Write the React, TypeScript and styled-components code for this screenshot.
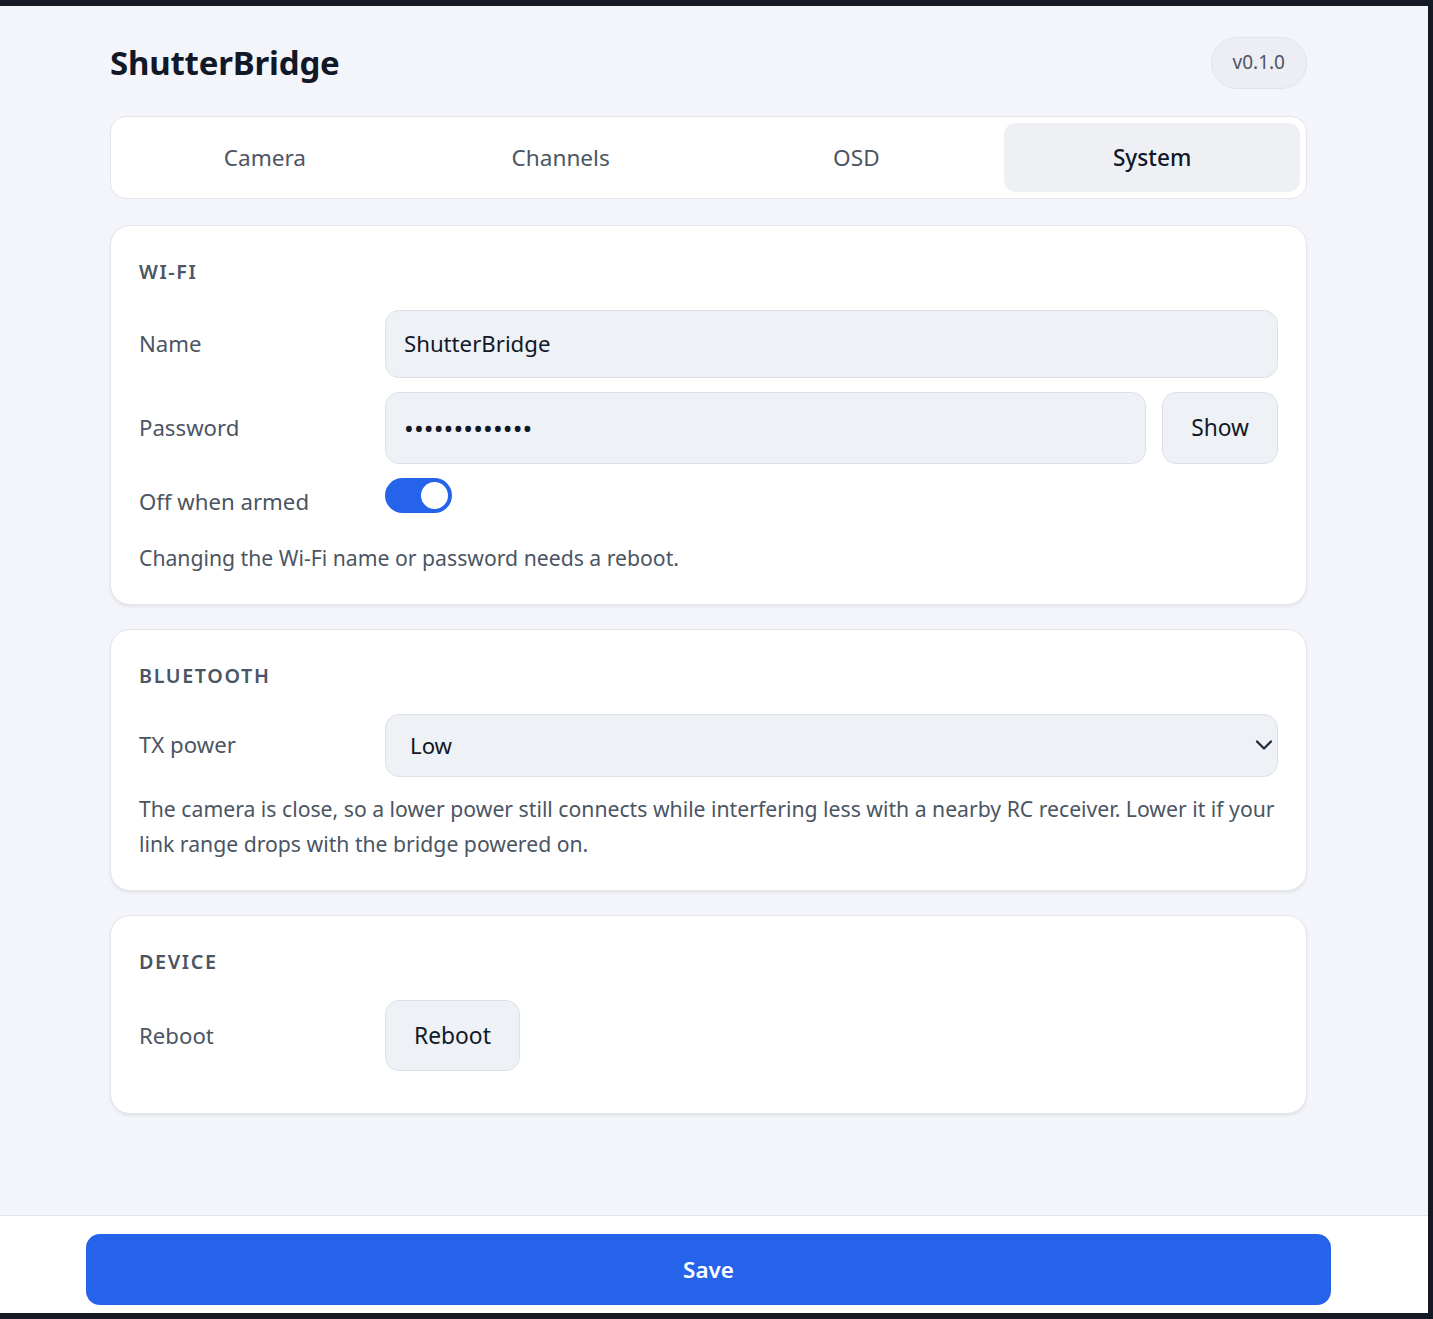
import React, { useState } from "react";
import styled, { createGlobalStyle } from "styled-components";

const GlobalStyle = createGlobalStyle`
  * { box-sizing: border-box; }
  html, body { margin: 0; padding: 0; }
  body {
    background: #151923;
    font-family: "Noto Sans", "Open Sans", sans-serif;
    font-size: 21.2px;
    line-height: 35.84px;
    color: #111827;
  }
`;

const Frame = styled.div`
  padding: 6px 5px 6px 0;
  width: 1433px;
  height: 1319px;
  background: #151923;
`;

const Window = styled.div`
  width: 1428px;
  height: 1307px;
  background: #f4f5fa;
  display: flex;
  flex-direction: column;
  overflow: hidden;
`;

const Scroll = styled.main`
  flex: 1;
  padding: 31px 0 0 110px;
`;

const Column = styled.div`
  width: 1197px;
  display: flex;
  flex-direction: column;
  gap: 24px;
`;

const Header = styled.header`
  display: flex;
  align-items: center;
  justify-content: space-between;
  height: 52px;
  margin-bottom: 3px;
`;

const Title = styled.h1`
  margin: 0;
  font-size: 33px;
  font-weight: 700;
  color: #111827;
  line-height: 40px;
  letter-spacing: -0.2px;
`;

const Version = styled.span`
  height: 52px;
  padding: 0 21px;
  display: inline-flex;
  align-items: center;
  border-radius: 999px;
  background: #eceef3;
  border: 1px solid #e1e3e8;
  color: #4b5563;
  font-size: 19px;
`;

const Tabs = styled.nav`
  display: grid;
  grid-template-columns: repeat(4, 1fr);
  padding: 6px;
  height: 83px;
  background: #ffffff;
  border: 1px solid #e2e5ea;
  border-radius: 16px;
  margin-bottom: 2px;
`;

const Tab = styled.button<{ $active?: boolean }>`
  border: none;
  border-radius: 12px;
  font-family: inherit;
  font-size: 22.6px;
  background: ${(p) => (p.$active ? "#eef0f4" : "transparent")};
  color: ${(p) => (p.$active ? "#111827" : "#4b5563")};
  font-weight: ${(p) => (p.$active ? 500 : 400)};
  cursor: pointer;
`;

const Card = styled.section`
  background: #ffffff;
  border: 1px solid #e2e5ea;
  border-radius: 20px;
  padding: 28px;
  box-shadow: 0 2px 3px rgba(17, 24, 39, 0.07);
`;

const CardTitle = styled.h2`
  margin: 0 0 20px;
  font-size: 19.8px;
  font-weight: 600;
  letter-spacing: 1.6px;
  text-transform: uppercase;
  color: #4b5563;
  line-height: 35.84px;
`;

const Row = styled.div<{ $minH?: number }>`
  display: grid;
  grid-template-columns: 246px 1fr;
  align-items: center;
  margin-bottom: 14px;
  min-height: ${(p) => (p.$minH ? `${p.$minH}px` : "auto")};
`;

const Label = styled.label`
  color: #4b5563;
  font-size: 22.2px;
`;

const Field = styled.div`
  display: flex;
  gap: 16px;
  align-items: stretch;
`;

const Input = styled.input<{ $h?: number }>`
  flex: 1;
  min-width: 0;
  height: ${(p) => p.$h ?? 68}px;
  padding: 0 18px;
  border: 1px solid #dde1e7;
  border-radius: 14px;
  background: #eef1f6;
  font-family: inherit;
  font-size: 22.2px;
  color: #111827;
  outline: none;
  &[type="password"] {
    font-size: 26px;
    letter-spacing: 0.1px;
  }
`;

const Button = styled.button<{ $h?: number }>`
  height: ${(p) => p.$h ?? 70}px;
  padding: 0 28px;
  border: 1px solid #dde1e7;
  border-radius: 14px;
  background: #eef1f6;
  font-family: inherit;
  font-size: 22.8px;
  color: #111827;
  cursor: pointer;
`;

const ToggleTrack = styled.button<{ $on: boolean }>`
  align-self: start;
  width: 67px;
  height: 35px;
  border: none;
  padding: 4px;
  border-radius: 999px;
  background: ${(p) => (p.$on ? "#2563eb" : "#cbd2dc")};
  display: flex;
  justify-content: ${(p) => (p.$on ? "flex-end" : "flex-start")};
  cursor: pointer;
`;

const ToggleKnob = styled.span`
  width: 27px;
  height: 27px;
  border-radius: 50%;
  background: #ffffff;
`;

const Help = styled.p`
  margin: 0;
  color: #4b5563;
  font-size: 21.2px;
  line-height: 35.84px;
`;

const SelectWrap = styled.div`
  position: relative;
`;

const Select = styled.select`
  width: 100%;
  height: 63px;
  padding: 0 50px 0 24px;
  appearance: none;
  -webkit-appearance: none;
  border: 1px solid #dde1e7;
  border-radius: 14px;
  background: #eef1f6;
  font-family: inherit;
  font-size: 22.2px;
  color: #111827;
  outline: none;
`;

const Chevron = styled.svg`
  position: absolute;
  right: 0;
  top: 50%;
  transform: translateY(-50%);
  pointer-events: none;
`;

const Footer = styled.footer`
  background: #ffffff;
  border-top: 1px solid #e3e5ea;
  height: 98px;
  padding: 18px 0 0 86px;
`;

const SaveButton = styled.button`
  width: 1245px;
  height: 71px;
  border: none;
  border-radius: 14px;
  background: #2563eb;
  color: #ffffff;
  font-family: inherit;
  font-size: 22.4px;
  font-weight: 600;
  cursor: pointer;
`;

export default function App() {
  const [show, setShow] = useState(false);
  const [armedOff, setArmedOff] = useState(true);
  return (
    <>
      <GlobalStyle />
      <Frame>
        <Window>
          <Scroll>
            <Column>
              <Header>
                <Title>ShutterBridge</Title>
                <Version>v0.1.0</Version>
              </Header>
              <Tabs>
                <Tab>Camera</Tab>
                <Tab>Channels</Tab>
                <Tab>OSD</Tab>
                <Tab $active>System</Tab>
              </Tabs>

              <Card>
                <CardTitle>Wi-Fi</CardTitle>
                <Row>
                  <Label>Name</Label>
                  <Input defaultValue="ShutterBridge" />
                </Row>
                <Row>
                  <Label>Password</Label>
                  <Field>
                    <Input $h={72} type={show ? "text" : "password"} defaultValue="shutterbridge" />
                    <Button $h={72} onClick={() => setShow(!show)}>
                      {show ? "Hide" : "Show"}
                    </Button>
                  </Field>
                </Row>
                <Row $minH={48}>
                  <Label>Off when armed</Label>
                  <ToggleTrack $on={armedOff} onClick={() => setArmedOff(!armedOff)}>
                    <ToggleKnob />
                  </ToggleTrack>
                </Row>
                <Help>Changing the Wi-Fi name or password needs a reboot.</Help>
              </Card>

              <Card>
                <CardTitle>Bluetooth</CardTitle>
                <Row>
                  <Label>TX power</Label>
                  <SelectWrap>
                    <Select defaultValue="low">
                      <option value="low">Low</option>
                      <option value="medium">Medium</option>
                      <option value="high">High</option>
                    </Select>
                    <Chevron width="28" height="28" viewBox="0 0 24 24" fill="none" stroke="#1f2937" strokeWidth="1.9" strokeLinecap="round" strokeLinejoin="round">
                      <path d="M6 9l6 6 6-6" />
                    </Chevron>
                  </SelectWrap>
                </Row>
                <Help>
                  The camera is close, so a lower power still connects while interfering less with a nearby RC receiver. Lower it if your link range drops with the bridge powered on.
                </Help>
              </Card>

              <Card>
                <CardTitle>Device</CardTitle>
                <Row>
                  <Label>Reboot</Label>
                  <div>
                    <Button $h={71}>Reboot</Button>
                  </div>
                </Row>
              </Card>
            </Column>
          </Scroll>
          <Footer>
            <SaveButton>Save</SaveButton>
          </Footer>
        </Window>
      </Frame>
    </>
  );
}
